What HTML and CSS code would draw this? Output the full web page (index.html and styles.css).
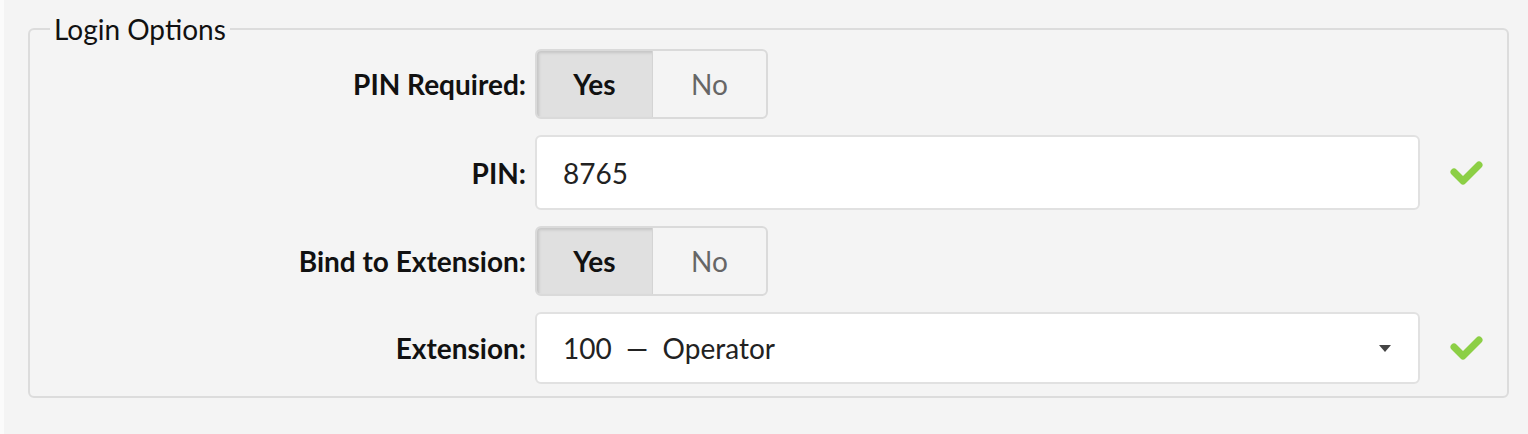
FILE: index.html
```html
<!DOCTYPE html>
<html>
    <head>
        <meta charset="utf-8">
        <link rel="stylesheet" href="styles.css">
    </head>
    <body>
        <div id="page">
            <fieldset class="options">
                <legend>Login Options</legend>

                <div class="row">
                    <label class="lbl">PIN Required:</label>
                    <div class="toggle">
                        <span class="seg on">Yes</span>
                        <span class="seg">No</span>
                    </div>
                    <span></span>
                </div>

                <div class="row">
                    <label class="lbl">PIN:</label>
                    <div class="field">8765</div>
                    <span class="ok">
                        <svg width="34" height="28" viewBox="0 0 34 28"><polyline points="4,13 13,22 29,6" /></svg>
                    </span>
                </div>

                <div class="row">
                    <label class="lbl">Bind to Extension:</label>
                    <div class="toggle">
                        <span class="seg on">Yes</span>
                        <span class="seg">No</span>
                    </div>
                    <span></span>
                </div>

                <div class="row">
                    <label class="lbl">Extension:</label>
                    <div class="field select">
                        <span>100 &nbsp;&mdash;&nbsp; Operator</span>
                        <span class="caret"></span>
                    </div>
                    <span class="ok">
                        <svg width="34" height="28" viewBox="0 0 34 28"><polyline points="4,13 13,22 29,6" /></svg>
                    </span>
                </div>
            </fieldset>
        </div>
    </body>
</html>
```
FILE: styles.css
```css
*{ padding: 0px; margin: 0px; box-sizing: border-box; }

html, body
{
    width: 100%;
    height: 100%;
    overflow: hidden;
    background: #fbfbfb;
    font-family: Lato, "Open Sans", sans-serif;
    color: #111;
}

#page
{
    margin-left: 4px;
    height: 100%;
    background: #f4f4f4;
    padding: 15px 19px 0 24px;
}

.options
{
    border: 2px solid #dcdcdc;
    border-radius: 6px;
    padding: 6px 0 12px 0;
}

.options legend
{
    margin-left: 20px;
    padding: 0 4px;
    font-size: 28px;
    line-height: 28px;
    color: #111;
}

.row
{
    display: grid;
    grid-template-columns: 496px 885px 1fr;
    column-gap: 9px;
    align-items: center;
    margin-bottom: 16px;
}
.row:last-child { margin-bottom: 0; }

.lbl
{
    text-align: right;
    font-weight: bold;
    font-size: 28px;
    color: #111;
}

.toggle
{
    display: flex;
    width: 233px;
    height: 70px;
    border: 2px solid #dadada;
    border-radius: 6px;
    overflow: hidden;
}

.seg
{
    display: flex;
    align-items: center;
    justify-content: center;
    font-size: 28px;
    color: #666;
    width: 114px;
}

.seg.on
{
    width: 117px;
    background: #e0e0e0;
    color: #111;
    font-weight: bold;
    box-shadow: inset 2px 2px 3px rgba(0,0,0,.12);
    border-right: 1px solid #d4d4d4;
}

.field
{
    display: flex;
    align-items: center;
    height: 75px;
    background: white;
    border: 2px solid #e1e1e1;
    border-radius: 6px;
    padding-left: 26px;
    font-size: 28px;
    color: #222;
}

.field.select
{
    height: 72px;
    justify-content: space-between;
    padding-right: 27px;
}

.caret
{
    width: 0;
    height: 0;
    border-left: 6px solid transparent;
    border-right: 6px solid transparent;
    border-top: 7px solid #444;
}

.ok
{
    padding-left: 21px;
    display: flex;
    align-items: center;
}

.ok svg polyline
{
    fill: none;
    stroke: #8ccf45;
    stroke-width: 7;
    stroke-linecap: round;
    stroke-linejoin: round;
}
```
